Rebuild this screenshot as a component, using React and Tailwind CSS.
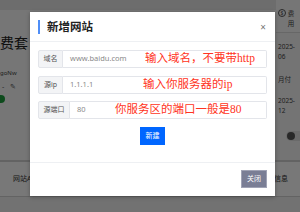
import React from "react";

const sans = { fontFamily: '"Noto Sans", "Noto Sans CJK SC", sans-serif' };

function Row({ label, labelW, placeholder, note, noteLeft }) {
  return (
    <div className="relative flex h-[18px] mr-[8px]">
      <div
        className={`${labelW} flex items-center justify-center bg-[#f3f4f6] border border-[#e3e5ea] rounded-l-[2px] text-[7px] text-[#555]`}
      >
        {label}
      </div>
      <div className="flex-1 flex items-center border border-l-0 border-[#e3e5ea] rounded-r-[2px] pl-[7px] text-[7.5px] text-[#8a8a8a]">
        {placeholder}
      </div>
      <div
        className={`absolute ${noteLeft} top-[-1px] text-[11.5px] leading-[18px] text-[#ff3322] whitespace-nowrap [font-family:"Liberation_Serif","Noto_Sans_CJK_SC",serif]`}
      >
        {note}
      </div>
    </div>
  );
}

export default function App() {
  return (
    <div className="w-[300px] h-[212px] relative overflow-hidden bg-[#f4f4f4]" style={sans}>
      {/* page behind */}
      <div className="flex flex-col h-full">
        <div className="flex h-[160px]">
          <div className="flex-1 flex flex-col">
            <div className="h-[10px] bg-[#e4e4e4]" />
            <div className="flex-1 bg-[#f6f6f6] pt-[24px]">
              <div className="text-[14px] leading-[18px] text-[#222]">费套</div>
              <div className="mt-[17px] text-[6px] text-[#444]">goNw</div>
              <div className="mt-[4px] pl-[2px] flex items-center gap-[6px] text-[7px] text-[#555]">
                <span>-</span>
                <span>✎</span>
              </div>
              <div className="mt-[2px] -ml-[3px] w-[8px] h-[8px] rounded-full bg-[#1c9c3c]" />
            </div>
          </div>
          <div className="w-[24px] flex flex-col bg-[#f2f2f2] text-[6.5px] text-[#444]">
            <div className="h-[33px] border-b border-[#d8d8d8] flex items-start pt-[9px] pl-[2px] gap-[2px] bg-[#f6f6f6]">
              <span className="w-[8px] h-[8px] rounded-full border border-[#555] flex items-center justify-center text-[5px] leading-none">$</span>
              <span>费用</span>
            </div>
            <div className="pl-[2px] pt-[9px]">2025-06</div>
            <div className="pl-[2px] pt-[13px]">月付</div>
            <div className="pl-[2px] pt-[12px]">2025-12</div>
            <div className="ml-[10px] mt-[15px] w-[20px] h-[10px] rounded-full bg-[#ddd] flex items-center pl-[1px]">
              <div className="w-[8px] h-[8px] rounded-full bg-[#555]" />
            </div>
          </div>
        </div>
        <div className="h-[37px] border-t-[2px] border-b border-[#cfcfcf] bg-[#fafafa] flex items-center text-[7px] text-[#333]">
          <span className="ml-[13px]">网站A</span>
          <span className="ml-auto mr-[12px]">信息</span>
        </div>
        <div className="flex-1 bg-[#eeeeee]" />
      </div>

      {/* overlay */}
      <div className="absolute inset-0 bg-black/[0.52]" />

      {/* modal */}
      <div className="absolute left-[30px] top-[12px] w-[245px] h-[184px] bg-white flex flex-col shadow-[0_1px_4px_rgba(0,0,0,0.3)]">
        <div className="h-[30px] shrink-0 border-b border-[#eef0f3] flex items-center pl-[8px] pr-[9px]">
          <div className="w-[2px] h-[14px] bg-[#4f8ef7]" />
          <div className="ml-[7px] text-[11.5px] font-semibold text-[#222]">新增网站</div>
          <div className="ml-auto text-[10px] leading-none text-[#777]">×</div>
        </div>
        <div className="h-[121px] shrink-0 border-b border-[#eef0f3] pl-[8px] pt-[8px] flex flex-col">
          <Row label="域名" labelW="w-[25px]" placeholder="www.baidu.com" note="输入域名，不要带http" noteLeft="left-[107px]" />
          <div className="h-[8px]" />
          <Row label="源ip" labelW="w-[25px]" placeholder="1.1.1.1" note="输入你服务器的ip" noteLeft="left-[105px]" />
          <div className="h-[7px]" />
          <Row label="源端口" labelW="w-[32px]" placeholder="80" note="你服务区的端口一般是80" noteLeft="left-[77px]" />
          <div className="mt-[8px] flex justify-center pr-[8px]">
            <div className="w-[25px] h-[18px] bg-[#0066ff] text-white text-[7px] flex items-center justify-center">新建</div>
          </div>
        </div>
        <div className="flex-1 flex justify-end items-start pt-[7px] pr-[8px]">
          <div className="w-[26px] h-[18px] bg-[#7a7e95] border border-[#a0a3b5] text-white text-[7px] flex items-center justify-center">关闭</div>
        </div>
      </div>
    </div>
  );
}
